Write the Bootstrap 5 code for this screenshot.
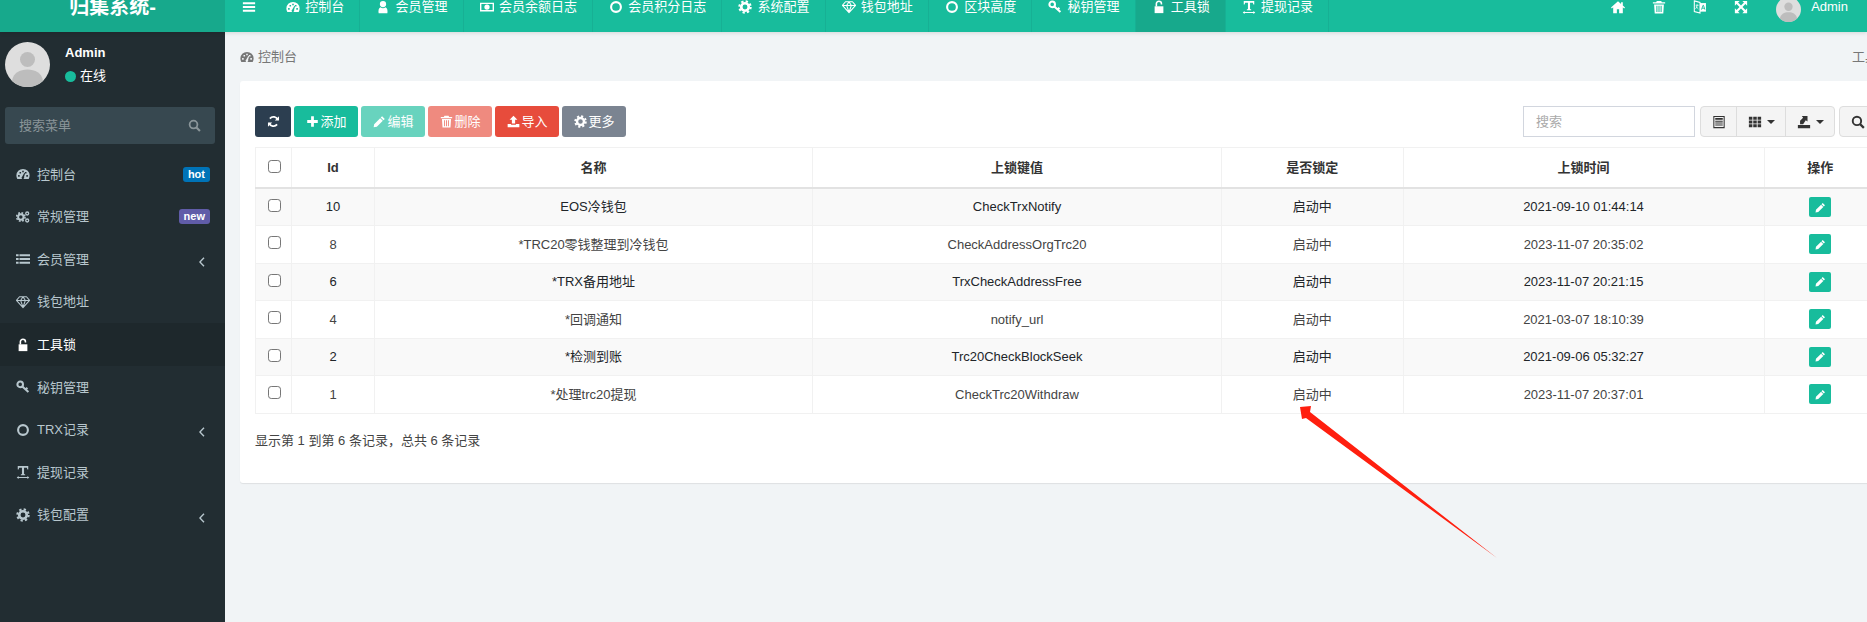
<!DOCTYPE html>
<html lang="zh-CN">
<head>
<meta charset="UTF-8">
<meta name="viewport" content="width=device-width, initial-scale=1.0">
<title>工具锁</title>
<link href="https://cdn.jsdelivr.net/npm/bootstrap@5.3.2/dist/css/bootstrap.min.css" rel="stylesheet">
<style>
    html, body { height: 622px; overflow: hidden; }
    body {
        position: relative;
        font-family: "Liberation Sans", "Noto Sans CJK SC", sans-serif;
        font-size: 13px;
        color: #444;
        background: #f1f4f6;
    }
    .ico { width: 14px; height: 14px; fill: currentColor; flex: none; display: block; }

    /* top bar, the shot starts 18px below the top of the page */
    .topbar { height: 50px; margin-top: -18px; background: #18bc9c; color: #fff; box-shadow: 0 1px 4px rgba(0,0,0,.12); position: relative; }
    .brand { width: 225px; flex: none; background: #17a98c; font-size: 20px; font-weight: 700; line-height: 50px; text-align: center; }
    .toggle-link { width: 45px; flex: none; padding-left: 17px; }
    .top-item { padding: 0 15px; height: 50px; border-right: 1px solid #17b094; color: #fff; text-decoration: none; white-space: nowrap; }
    .top-item .ico { width: 14px; height: 14px; margin: 0 5.3px 0 1px; }
    .top-item.is-on { background: #17a98c; }
    .top-tool { width: 41px; height: 50px; color: #fff; }
    .top-user { padding: 0 19px 0 15px; gap: 10px; }
    .top-user svg { margin-top: 5px; }

    .shell { height: 590px; }
    .sidebar { width: 225px; flex: none; background: #222d32; color: #b8c7ce; }
    .user-box { height: 75px; padding: 10px 0 0 5px; gap: 15px; color: #fff; }
    .user-name { font-weight: 700; line-height: 22px; }
    .user-state { margin-top: 2px; line-height: 20px; gap: 4px; }
    .dot-on { width: 11px; height: 11px; border-radius: 50%; background: #18bc9c; }
    .menu-search { height: 37px; margin: 0 10px 0 5px; padding: 0 14px; background: #374850; border-radius: 3px; color: #8a9599; }
    .menu-search .ico { width: 13px; height: 13px; }
    .side-menu { margin-top: 9px; }
    .side-item { height: 42.6px; padding: 0 15px 0 16px; color: #b8c7ce; text-decoration: none; }
    .side-item .ico { margin-right: 7px; }
    .side-item.is-on { background: #1e282c; color: #fff; }
    .side-arrow { width: 6px; height: 10px; margin: 5px 5px 0 auto !important; }
    .tag-hot, .tag-new { margin-left: auto; font-size: 11px; font-weight: 700; line-height: 15px; padding: 0 5px; border-radius: 3px; color: #fff; }
    .tag-hot { background: #0073b7; }
    .tag-new { background: #605ca8; }

    /* content runs past the right edge of the window */
    .main-area { flex: 1 1 auto; overflow: hidden; padding: 0 15px; }
    .main-inner { width: 1651px; }
    .crumbs { height: 49px; color: #777; }
    .crumbs .ico { color: #777; }
    .sheet { height: 402px; padding: 25px 15px 0; background: #fff; border-radius: 3px; box-shadow: 0 1px 1px rgba(0,0,0,.08); }
    .tool-row { height: 31px; margin-bottom: 10px; }
    .tool-set { gap: 3px; }
    .tool-btn { height: 31px; padding: 0 11.5px; gap: 2px; font-size: 13px; border: 0; border-radius: 3px; color: #fff; display: flex; align-items: center; }
    .tool-btn .ico { width: 13px; height: 13px; }
    .tool-btn:disabled { opacity: .65; color: #fff; }
    .c-navy { background: #2c3e50; }
    .c-teal { background: #18bc9c; }
    .c-red { background: #e74c3c; }
    .c-grey { background: #7b8491; }
    .find-box { width: 172px; height: 31px; padding: 0 12px; margin-right: 5px; border: 1px solid #d2d6de; border-radius: 0; font-size: 13px; }
    .find-box::placeholder { color: #aaa; }
    .grey-group { height: 31px; border: 1px solid #ddd; border-radius: 4px; background: #f4f4f4; color: #333; }
    .grey-group > span { height: 29px; padding: 0 10.5px; gap: 5px; }
    .grey-group > span + span { border-left: 1px solid #ddd; }
    .caret-down { width: 0; height: 0; border-left: 4px solid transparent; border-right: 4px solid transparent; border-top: 4px solid #333; }

    .lock-table { table-layout: fixed; width: 1621px; margin: 0; font-size: 13px; --bs-table-border-color: #f1f1f1; --bs-table-striped-bg: #f9f9f9; --bs-table-color: #444; text-align: center; }
    .lock-table th, .lock-table td { padding: 0; vertical-align: middle; height: 37.5px; }
    .lock-table thead th { height: 40.5px; color: #333; font-weight: 700; border-bottom: 2px solid #e2e2e2; }
    .lock-table tr.row-hover td { --bs-table-bg-state: #f4f4f4; }
    .tick { width: 13px; height: 13px; margin: -3px 0 0 12px; border-color: #767676; border-radius: 3px; display: block; }
    .w-a { width: 36px; } .w-b { width: 83px; } .w-c { width: 438px; } .w-d { width: 409px; } .w-e { width: 181.5px; } .w-f { width: 361px; } .w-g { width: 112.5px; }
    .edit-btn { width: 22px; height: 20px; padding: 0; margin: 0 auto; background: #18bc9c; color: #fff; border: 0; border-radius: 2px; }
    .edit-btn .ico { width: 11px; height: 11px; }
    .foot-info { margin-top: 18px; line-height: 18px; }

    .mark-arrow { position: absolute; left: 0; top: 0; pointer-events: none; }
</style>
</head>
<body>
<svg width="0" height="0" class="position-absolute">
    <defs>
        <symbol id="i-bars" viewBox="0 0 16 16"><path d="M1 2.5h14v2.4H1zM1 6.8h14v2.4H1zM1 11.1h14v2.4H1z"/></symbol>
        <symbol id="i-gauge" viewBox="0 0 16 16"><path fill-rule="evenodd" d="M8 2.2A7.6 7.6 0 0 0 .4 9.8c0 1.5.4 2.8 1.1 4h13c.7-1.2 1.1-2.5 1.1-4A7.6 7.6 0 0 0 8 2.2zM2.4 9.2h1.8V11H2.4zM4 5.6h1.8v1.8H4zM7.1 4.2h1.8V6H7.1zM10.2 5.6H12v1.8h-1.800zM11.8 9.2h1.8V11h-1.800zM7 11l2.600-4.300.800.400L9.200 11.500a1.500 1.500 0 1 1-2.200-.500z"/></symbol>
        <symbol id="i-user" viewBox="0 0 16 16"><path d="M8 1a3.600 3.600 0 1 1 0 7.200A3.600 3.600 0 0 1 8 1zM3 15c-.6-3 .2-6.200 2.300-6.700.7.600 1.600 1 2.700 1s2-.4 2.700-1C12.800 8.800 13.600 12 13 15z"/></symbol>
        <symbol id="i-money" viewBox="0 0 16 16"><path fill-rule="evenodd" d="M0 3h16v10H0zM1.600 4.600v6.800h12.800V4.600zM8 5a3 3 0 1 1 0 6 3 3 0 0 1 0-6z"/></symbol>
        <symbol id="i-ring" viewBox="0 0 16 16"><path fill-rule="evenodd" d="M8 1.200a6.800 6.800 0 1 1 0 13.600A6.800 6.800 0 0 1 8 1.200zM8 3.600a4.400 4.400 0 1 0 0 8.800 4.400 4.400 0 0 0 0-8.800z"/></symbol>
        <symbol id="i-cog" viewBox="0 0 16 16"><circle cx="8" cy="8" r="4.300" fill="none" stroke="currentColor" stroke-width="3"/><circle cx="8" cy="8" r="6.500" fill="none" stroke="currentColor" stroke-width="2.400" stroke-dasharray="2.600 2.500"/></symbol>
        <symbol id="i-cogs" viewBox="0 0 16 16"><circle cx="5.500" cy="8" r="3.100" fill="none" stroke="currentColor" stroke-width="2.200"/><circle cx="5.500" cy="8" r="4.800" fill="none" stroke="currentColor" stroke-width="1.800" stroke-dasharray="2 1.800"/><circle cx="12.800" cy="4" r="1.700" fill="none" stroke="currentColor" stroke-width="1.500"/><circle cx="12.800" cy="12" r="1.700" fill="none" stroke="currentColor" stroke-width="1.500"/></symbol>
        <symbol id="i-list" viewBox="0 0 16 16"><path d="M0 2.500h3v2.400H0zM4 2.500h12v2.400H4zM0 6.800h3v2.400H0zM4 6.800h12v2.400H4zM0 11.100h3v2.400H0zM4 11.100h12v2.400H4z"/></symbol>
        <symbol id="i-gem" viewBox="0 0 16 16"><path d="M4 2h8l3.500 4.200L8 14.500.5 6.200zM.8 6.200h14.400M5.300 6.200 8 14M10.700 6.200 8 14M5.300 6.200 8 2l2.700 4.200" fill="none" stroke="currentColor" stroke-width="1.200" stroke-linejoin="round"/></symbol>
        <symbol id="i-key" viewBox="0 0 16 16"><circle cx="4.800" cy="5" r="3.200" fill="none" stroke="currentColor" stroke-width="2.300"/><path d="M7.200 7.300l7 6.400M11 10.800l2-2" fill="none" stroke="currentColor" stroke-width="2.300"/></symbol>
        <symbol id="i-unlock" viewBox="0 0 16 16"><path d="M3 7.200h10V15H3z"/><path d="M5 7.500V4.300a2.900 2.900 0 0 1 5.800 0v.8" fill="none" stroke="currentColor" stroke-width="1.800"/></symbol>
        <symbol id="i-height" viewBox="0 0 16 16"><path d="M2 1h12v4h-1l-.6-2H9.200v7.400l1.300.5v.9h-5v-.9l1.300-.5V3H3.600L3 5H2zM.8 14.300l2.200-1.800v1.200h10v-1.200l2.200 1.800L13 16v-1.200H3V16z"/></symbol>
        <symbol id="i-home" viewBox="0 0 16 16"><path d="M8 1.500 0 8.500l1 1.100 1.500-1.300V15h4.200v-4.500h2.600V15h4.200V8.300L15 9.600l1-1.100-2.500-2.200V2.500h-2v2z"/></symbol>
        <symbol id="i-trash" viewBox="0 0 16 16"><path fill-rule="evenodd" d="M5.500 1h5l.8 1.600H15V4H1V2.600h3.700zM2.400 5h11.200l-.7 10.500H3.100zM5 6.500v7.300h1.200V6.500zM7.400 6.500v7.300h1.200V6.500zM9.800 6.500v7.300H11V6.500z"/></symbol>
        <symbol id="i-lang" viewBox="0 0 16 16"><path d="M1.500 1 8 2.800V15l-6.500-1.800z" fill="none" stroke="currentColor" stroke-width="1.200"/><path d="M8 3.500h6.800v9.800H8z"/><path d="M9.700 11l1.800-5h.4l1.700 5M10.400 9.400h2.600" fill="none" stroke="#18bc9c" stroke-width="1"/><path d="M3 6h3.400M4.700 5c0 2.500-.8 4-1.800 5M3.800 7.500c.6 1.300 1.500 2.200 2.400 2.800" fill="none" stroke="currentColor" stroke-width=".9"/></symbol>
        <symbol id="i-full" viewBox="0 0 16 16"><path d="M1 1h5.500L4.600 2.900 8 6.300l3.400-3.400L9.500 1H15v5.500l-1.900-1.900L9.700 8l3.400 3.400L15 9.500V15H9.500l1.900-1.900L8 9.700l-3.400 3.400L6.500 15H1V9.500l1.900 1.900L6.300 8 2.900 4.600 1 6.500z"/></symbol>
        <symbol id="i-find" viewBox="0 0 16 16"><circle cx="6.800" cy="6.800" r="4.800" fill="none" stroke="currentColor" stroke-width="2.200"/><path d="M10.400 10.400l4.300 4.300" fill="none" stroke="currentColor" stroke-width="2.600"/></symbol>
        <symbol id="i-sync" viewBox="0 0 16 16"><path d="M13.300 6.200A5.600 5.600 0 0 0 3.600 4.400M2.700 9.800a5.600 5.600 0 0 0 9.700 1.800" fill="none" stroke="currentColor" stroke-width="2.200"/><path d="M14.800 1.500v5.200H9.600zM1.200 14.500V9.300h5.200z"/></symbol>
        <symbol id="i-plus" viewBox="0 0 16 16"><path d="M6.300 1.500h3.400v4.800h4.800v3.400H9.700v4.800H6.300V9.700H1.500V6.300h4.800z"/></symbol>
        <symbol id="i-pencil" viewBox="0 0 16 16"><path d="M11.200 1.500l3.300 3.300-1.700 1.700-3.300-3.300zM8.800 3.900l3.300 3.300-7.400 7.400L.8 15.200l.6-3.900z"/></symbol>
        <symbol id="i-upload" viewBox="0 0 16 16"><path d="M8 1l4.800 4.800H10V10.500H6V5.800H3.200zM.8 11h4.200v1h6v-1h4.200v4H.8z"/></symbol>
        <symbol id="i-sheet" viewBox="0 0 16 16"><path fill-rule="evenodd" d="M1.500 1h13v14h-13zM2.700 2.200v11.600h10.600V2.200zM3.700 3.400h8.600v2H3.700zM3.700 6.500h8.600v1.100H3.700zM3.700 8.600h8.600v1.100H3.700zM3.700 10.800h8.600v1.100H3.700z"/></symbol>
        <symbol id="i-grid" viewBox="0 0 16 16"><path d="M1 2h4v3.400H1zM6 2h4v3.400H6zM11 2h4v3.400h-4zM1 6.300h4v3.400H1zM6 6.300h4v3.400H6zM11 6.300h4v3.400h-4zM1 10.600h4V14H1zM6 10.600h4V14H6zM11 10.600h4V14h-4z"/></symbol>
        <symbol id="i-export" viewBox="0 0 16 16"><path d="M1 11.500h14V15H1zM3.500 10.500V6.500L7 3 5.500 1H12v6.500L10 6 7 10.500z"/></symbol>
        <symbol id="i-back" viewBox="0 0 6 10"><path d="M5 .8.9 5 5 9.200" fill="none" stroke="currentColor" stroke-width="1.400"/></symbol>
        <symbol id="i-face" viewBox="0 0 45 45"><circle cx="22.500" cy="22.500" r="22.500" fill="#dedede"/><circle cx="22.500" cy="17.500" r="7.500" fill="#bdbdbd"/><path d="M7 39c1-8 8-11.500 15.500-11.500S37 31 38 39a22.500 22.500 0 0 1-31 0z" fill="#bdbdbd"/></symbol>
    </defs>
</svg>

<header class="topbar d-flex">
    <div class="brand">归集系统-</div>
    <nav class="d-flex flex-grow-1">
        <a class="toggle-link d-flex align-items-center text-white"><svg class="ico"><use href="#i-bars"/></svg></a>
        <a class="top-item d-flex align-items-center"><svg class="ico"><use href="#i-gauge"/></svg>控制台</a>
        <a class="top-item d-flex align-items-center"><svg class="ico"><use href="#i-user"/></svg>会员管理</a>
        <a class="top-item d-flex align-items-center"><svg class="ico"><use href="#i-money"/></svg>会员余额日志</a>
        <a class="top-item d-flex align-items-center"><svg class="ico"><use href="#i-ring"/></svg>会员积分日志</a>
        <a class="top-item d-flex align-items-center"><svg class="ico"><use href="#i-cog"/></svg>系统配置</a>
        <a class="top-item d-flex align-items-center"><svg class="ico"><use href="#i-gem"/></svg>钱包地址</a>
        <a class="top-item d-flex align-items-center"><svg class="ico"><use href="#i-ring"/></svg>区块高度</a>
        <a class="top-item d-flex align-items-center"><svg class="ico"><use href="#i-key"/></svg>秘钥管理</a>
        <a class="top-item is-on d-flex align-items-center"><svg class="ico"><use href="#i-unlock"/></svg>工具锁</a>
        <a class="top-item d-flex align-items-center"><svg class="ico"><use href="#i-height"/></svg>提现记录</a>
        <div class="ms-auto d-flex align-items-center">
            <span class="top-tool d-flex align-items-center justify-content-center"><svg class="ico"><use href="#i-home"/></svg></span>
            <span class="top-tool d-flex align-items-center justify-content-center"><svg class="ico"><use href="#i-trash"/></svg></span>
            <span class="top-tool d-flex align-items-center justify-content-center"><svg class="ico"><use href="#i-lang"/></svg></span>
            <span class="top-tool d-flex align-items-center justify-content-center"><svg class="ico"><use href="#i-full"/></svg></span>
            <span class="top-user d-flex align-items-center"><svg width="25" height="25"><use href="#i-face"/></svg>Admin</span>
        </div>
    </nav>
</header>

<div class="shell d-flex">
    <aside class="sidebar">
        <div class="user-box d-flex">
            <svg width="45" height="45"><use href="#i-face"/></svg>
            <div>
                <div class="user-name">Admin</div>
                <div class="user-state d-flex align-items-center"><span class="dot-on"></span>在线</div>
            </div>
        </div>
        <div class="menu-search d-flex align-items-center justify-content-between">搜索菜单<svg class="ico"><use href="#i-find"/></svg></div>
        <div class="side-menu">
            <a class="side-item d-flex align-items-center"><svg class="ico"><use href="#i-gauge"/></svg>控制台<span class="tag-hot">hot</span></a>
            <a class="side-item d-flex align-items-center"><svg class="ico"><use href="#i-cogs"/></svg>常规管理<span class="tag-new">new</span></a>
            <a class="side-item d-flex align-items-center"><svg class="ico"><use href="#i-list"/></svg>会员管理<svg class="ico side-arrow"><use href="#i-back"/></svg></a>
            <a class="side-item d-flex align-items-center"><svg class="ico"><use href="#i-gem"/></svg>钱包地址</a>
            <a class="side-item is-on d-flex align-items-center"><svg class="ico"><use href="#i-unlock"/></svg>工具锁</a>
            <a class="side-item d-flex align-items-center"><svg class="ico"><use href="#i-key"/></svg>秘钥管理</a>
            <a class="side-item d-flex align-items-center"><svg class="ico"><use href="#i-ring"/></svg>TRX记录<svg class="ico side-arrow"><use href="#i-back"/></svg></a>
            <a class="side-item d-flex align-items-center"><svg class="ico"><use href="#i-height"/></svg>提现记录</a>
            <a class="side-item d-flex align-items-center"><svg class="ico"><use href="#i-cog"/></svg>钱包配置<svg class="ico side-arrow"><use href="#i-back"/></svg></a>
        </div>
    </aside>

    <main class="main-area">
        <div class="main-inner">
            <div class="crumbs d-flex align-items-center justify-content-between">
                <span class="d-flex align-items-center gap-1"><svg class="ico"><use href="#i-gauge"/></svg>控制台</span>
                <span>工具锁</span>
            </div>
            <div class="sheet">
                <div class="tool-row d-flex">
                    <div class="tool-set d-flex">
                        <button class="tool-btn c-navy"><svg class="ico"><use href="#i-sync"/></svg></button>
                        <button class="tool-btn c-teal"><svg class="ico"><use href="#i-plus"/></svg>添加</button>
                        <button class="tool-btn c-teal" disabled><svg class="ico"><use href="#i-pencil"/></svg>编辑</button>
                        <button class="tool-btn c-red" disabled><svg class="ico"><use href="#i-trash"/></svg>删除</button>
                        <button class="tool-btn c-red"><svg class="ico"><use href="#i-upload"/></svg>导入</button>
                        <button class="tool-btn c-grey"><svg class="ico"><use href="#i-cog"/></svg>更多</button>
                    </div>
                    <div class="ms-auto d-flex">
                        <input class="find-box form-control" placeholder="搜索">
                        <div class="grey-group d-flex">
                            <span class="d-flex align-items-center"><svg class="ico"><use href="#i-sheet"/></svg></span>
                            <span class="d-flex align-items-center"><svg class="ico"><use href="#i-grid"/></svg><i class="caret-down"></i></span>
                            <span class="d-flex align-items-center"><svg class="ico"><use href="#i-export"/></svg><i class="caret-down"></i></span>
                        </div>
                        <div class="grey-group d-flex ms-1">
                            <span class="d-flex align-items-center"><svg class="ico"><use href="#i-find"/></svg></span>
                        </div>
                    </div>
                </div>
                <table class="table table-bordered table-striped lock-table">
                    <colgroup>
                        <col class="w-a"><col class="w-b"><col class="w-c"><col class="w-d"><col class="w-e"><col class="w-f"><col class="w-g">
                    </colgroup>
                    <thead>
                        <tr>
                            <th><input class="tick form-check-input" type="checkbox"></th>
                            <th>Id</th><th>名称</th><th>上锁键值</th><th>是否锁定</th><th>上锁时间</th><th>操作</th>
                        </tr>
                    </thead>
                    <tbody id="rows"></tbody>
                </table>
                <div class="foot-info">显示第 1 到第 6 条记录，总共 6 条记录</div>
            </div>
        </div>
    </main>
</div>

<svg class="mark-arrow" width="1867" height="622"><polygon fill="#ff1f0f" points="1300,407 1311,406 1310,412 1497,558 1306,418 1302,419"/></svg>

<script>
const rows = [
    [10, "EOS冷钱包", "CheckTrxNotify", "2021-09-10 01:44:14"],
    [8, "*TRC20零钱整理到冷钱包", "CheckAddressOrgTrc20", "2023-11-07 20:35:02"],
    [6, "*TRX备用地址", "TrxCheckAddressFree", "2023-11-07 20:21:15"],
    [4, "*回调通知", "notify_url", "2021-03-07 18:10:39"],
    [2, "*检测到账", "Trc20CheckBlockSeek", "2021-09-06 05:32:27"],
    [1, "*处理trc20提现", "CheckTrc20Withdraw", "2023-11-07 20:37:01"]
];
document.getElementById("rows").innerHTML = rows.map((r) => `
    <tr class="${r[0] === 2 ? "row-hover" : ""}">
        <td><input class="tick form-check-input" type="checkbox"></td>
        <td>${r[0]}</td><td>${r[1]}</td><td>${r[2]}</td><td>启动中</td><td>${r[3]}</td>
        <td><button class="edit-btn d-flex align-items-center justify-content-center"><svg class="ico"><use href="#i-pencil"/></svg></button></td>
    </tr>`).join("");
</script>
<script src="https://cdn.jsdelivr.net/npm/bootstrap@5.3.2/dist/js/bootstrap.bundle.min.js"></script>
</body>
</html>
